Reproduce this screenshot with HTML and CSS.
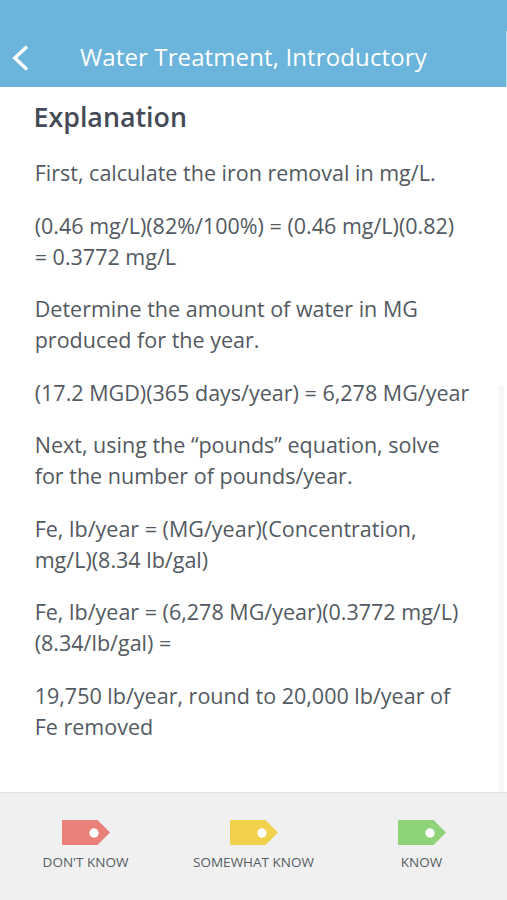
FILE: index.html
```
<!DOCTYPE html>
<html lang="en">
<head>
    <meta charset="UTF-8">
    <meta name="viewport" content="width=device-width, initial-scale=1.0">
    <title>Water Treatment, Introductory</title>
    <link rel="stylesheet" href="styles.css">
</head>
<body>
    <div class="app">
        <header class="header">
            <svg class="back" viewBox="0 0 18 28" width="18" height="28">
                <path d="M17 2.5 L4.8 14 L17 25.5" fill="none" stroke="#fff" stroke-width="3.4" stroke-linecap="butt" stroke-linejoin="miter"/>
            </svg>
            <span class="title">Water Treatment, Introductory</span>
        </header>

        <main class="content">
            <h1>Explanation</h1>
            <p>First, calculate the iron removal in mg/L.</p>
            <p>(0.46 mg/L)(82%/100%) = (0.46 mg/L)(0.82)<br>= 0.3772 mg/L</p>
            <p>Determine the amount of water in MG<br>produced for the year.</p>
            <p>(17.2 MGD)(365 days/year) = 6,278 MG/year</p>
            <p>Next, using the “pounds” equation, solve<br>for the number of pounds/year.</p>
            <p>Fe, lb/year = (MG/year)(Concentration,<br>mg/L)(8.34 lb/gal)</p>
            <p>Fe, lb/year = (6,278 MG/year)(0.3772 mg/L)<br>(8.34/lb/gal) =</p>
            <p>19,750 lb/year, round to 20,000 lb/year of<br>Fe removed</p>
            <div class="scrollbar"></div>
        </main>

        <footer class="footer">
            <div class="choice dont-know">
                <svg viewBox="0 0 48 25" width="48" height="25">
                    <path d="M1 0 H35.5 L48 12.5 L35.5 25 H1 Q0 25 0 24 V1 Q0 0 1 0 Z" fill="currentColor"/>
                    <circle cx="32" cy="13" r="4.7" fill="#fff"/>
                </svg>
                <span>DON'T KNOW</span>
            </div>
            <div class="choice somewhat">
                <svg viewBox="0 0 48 25" width="48" height="25">
                    <path d="M1 0 H35.5 L48 12.5 L35.5 25 H1 Q0 25 0 24 V1 Q0 0 1 0 Z" fill="currentColor"/>
                    <circle cx="32" cy="13" r="4.7" fill="#fff"/>
                </svg>
                <span>SOMEWHAT KNOW</span>
            </div>
            <div class="choice know">
                <svg viewBox="0 0 48 25" width="48" height="25">
                    <path d="M1 0 H35.5 L48 12.5 L35.5 25 H1 Q0 25 0 24 V1 Q0 0 1 0 Z" fill="currentColor"/>
                    <circle cx="32" cy="13" r="4.7" fill="#fff"/>
                </svg>
                <span>KNOW</span>
            </div>
        </footer>
    </div>
</body>
</html>
```
FILE: styles.css
```
* {
    box-sizing: border-box;
}
body {
    margin: 0;
    font-family: "Open Sans", sans-serif;
    background-color: #fff;
    color: #535961;
}
.app {
    display: flex;
    flex-direction: column;
    height: 900px;
    overflow: hidden;
}
.header {
    display: flex;
    align-items: center;
    height: 87px;
    padding: 28px 0 0 10px;
    /* thin light edge on the right, below the status bar */
    background: linear-gradient(#c5e1f0, #c5e1f0) 100% 31px / 1px 56px no-repeat #6bb4db;
    color: #fff;
}
.title {
    margin: 0 0 2px 52px;
    font-size: 24px;
    line-height: 32px;
    letter-spacing: 0.12px;
    white-space: nowrap;
}
.content {
    position: relative;
    flex: 1;
    padding: 12px 0 0 34px;
}
h1 {
    margin: 0 0 22.1px -0.5px;
    font-size: 26.8px;
    font-weight: 600;
    line-height: 36px;
    color: #454b56;
}
p {
    margin: 21.4px 0 0 0.7px;
    font-size: 21.53px;
    line-height: 31.1px;
    white-space: nowrap;
}
.scrollbar {
    position: absolute;
    top: 298px;
    right: 3px;
    bottom: 0;
    width: 6px;
    background-color: #f7f7f7;
    border-radius: 3px 3px 0 0;
}
.footer {
    display: grid;
    grid-template-columns: repeat(3, 168px);
    justify-content: center;
    height: 108px;
    padding-top: 27px;
    background-color: #f0f0f0;
    border-top: 1px solid #e3e3e3;
}
.choice {
    display: flex;
    flex-direction: column;
    align-items: center;
}
.choice span {
    margin-top: 7px;
    font-size: 13.5px;
    line-height: 20px;
    color: #555d63;
}
.dont-know svg {
    color: #e98179;
}
.somewhat svg {
    color: #f1d04b;
}
.know svg {
    color: #8ed279;
}
```
